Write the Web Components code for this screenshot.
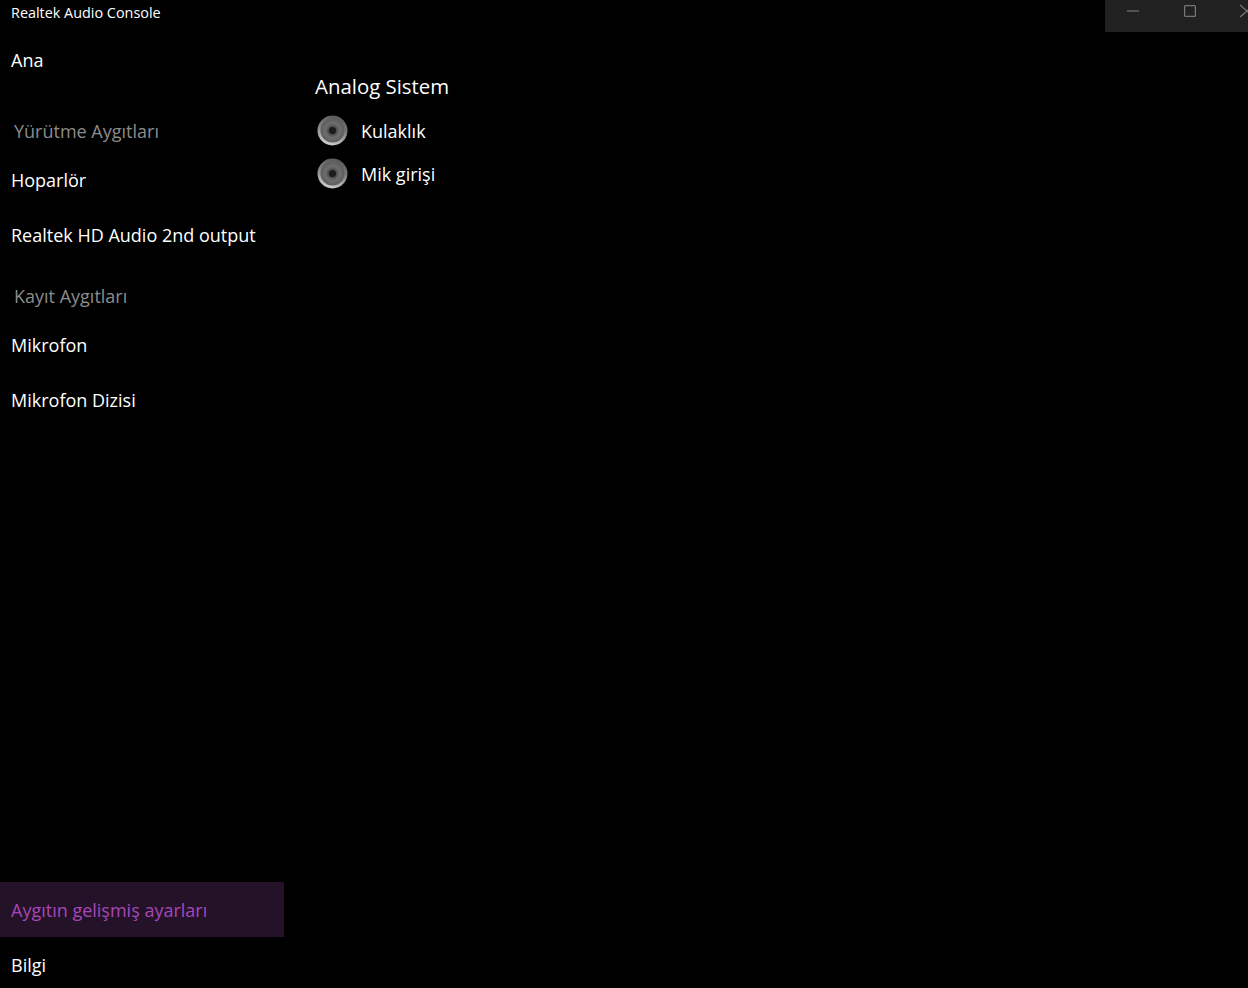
<!DOCTYPE html>
<html>
<head>
<meta charset="utf-8">
<style>
html, body { margin: 0; height: 100%; background: #000; overflow: hidden; }
body { font-family: "Open Sans", "Noto Sans", sans-serif; color: #fff; }
</style>
</head>
<body>
<audio-console></audio-console>

<template id="nav-item-tpl">
  <style>
    :host { display: flex; flex: none; align-items: center; height: 55px; padding-left: 11px; font-size: 18px; color: #fff; box-sizing: border-box; }
    :host([active]) { background: #241228; color: #a746b8; }
  </style>
  <slot></slot>
</template>

<template id="nav-head-tpl">
  <style>
    :host { display: flex; flex: none; align-items: center; height: 43px; padding-left: 14px; font-size: 18px; color: #8c8c8c; box-sizing: border-box; }
  </style>
  <slot></slot>
</template>

<template id="jack-row-tpl">
  <style>
    :host { display: flex; align-items: center; height: 43px; gap: 12px; padding-left: 1px; font-size: 18px; }
    svg { display: block; width: 33px; height: 33px; }
  </style>
  <svg viewBox="0 0 33 33">
    <defs>
      <linearGradient id="rim" x1="0.7" y1="0" x2="0.4" y2="1">
        <stop offset="0" stop-color="#565656"/>
        <stop offset="0.45" stop-color="#7c7c7c"/>
        <stop offset="1" stop-color="#cfcfcf"/>
      </linearGradient>
      <radialGradient id="disc">
        <stop offset="0.3" stop-color="#4a4a4a"/>
        <stop offset="0.6" stop-color="#6e6e6e"/>
        <stop offset="1" stop-color="#5c5c5c"/>
      </radialGradient>
      <filter id="soft"><feGaussianBlur stdDeviation="0.7"/></filter>
    </defs>
    <g filter="url(#soft)">
      <circle cx="16.5" cy="16.5" r="15" fill="url(#rim)"/>
      <circle cx="16.5" cy="16.5" r="12" fill="url(#disc)"/>
      <circle cx="16.5" cy="16.5" r="3.5" fill="#1a1a1a"/>
    </g>
  </svg>
  <span><slot></slot></span>
</template>

<template id="window-caps-tpl">
  <style>
    :host { display: block; position: absolute; top: 0; left: 1105px; width: 143px; height: 32px; background: #212121; overflow: hidden; }
    svg { position: absolute; top: 0; left: 0; }
  </style>
  <svg width="143" height="32" viewBox="0 0 143 32" fill="none" stroke="#767676" stroke-width="1.2">
    <path d="M22 11h12"/>
    <rect x="79.6" y="5.6" width="10.8" height="10.8" rx="1"/>
    <path d="M135 5l7 6-7 6M149 5l-7 6 7 6"/>
  </svg>
</template>

<template id="audio-console-tpl">
  <style>
    :host { display: grid; grid-template-columns: 284px 1fr; height: 988px; position: relative; overflow: hidden; background: #000; }
    .title { position: absolute; top: 4px; left: 11px; font-size: 14.4px; line-height: 18px; }
    nav { display: flex; flex-direction: column; padding-top: 32px; height: 992px; box-sizing: border-box; }
    .first { margin-top: 22px; }
    .second { margin-top: 12px; }
    .spacer { flex: 1; }
    main { padding: 72px 0 0 31px; }
    h2 { margin: 0 0 8px; font-weight: 400; font-size: 20.4px; line-height: 29px; }
  </style>
  <div class="title">Realtek Audio Console</div>
  <window-caps></window-caps>
  <nav>
    <nav-item>Ana</nav-item>
    <nav-head class="first">Yürütme Aygıtları</nav-head>
    <nav-item>Hoparlör</nav-item>
    <nav-item>Realtek HD Audio 2nd output</nav-item>
    <nav-head class="second">Kayıt Aygıtları</nav-head>
    <nav-item>Mikrofon</nav-item>
    <nav-item>Mikrofon Dizisi</nav-item>
    <div class="spacer"></div>
    <nav-item active>Aygıtın gelişmiş ayarları</nav-item>
    <nav-item>Bilgi</nav-item>
  </nav>
  <main>
    <h2>Analog Sistem</h2>
    <jack-row>Kulaklık</jack-row>
    <jack-row>Mik girişi</jack-row>
  </main>
</template>

<script>
function simple(tag, tplId) {
  customElements.define(tag, class extends HTMLElement {
    constructor() {
      super();
      this.attachShadow({mode: 'open'});
      this.shadowRoot.appendChild(document.getElementById(tplId).content.cloneNode(true));
    }
  });
}
simple('nav-item', 'nav-item-tpl');
simple('nav-head', 'nav-head-tpl');
simple('jack-row', 'jack-row-tpl');
simple('window-caps', 'window-caps-tpl');
simple('audio-console', 'audio-console-tpl');
</script>
</body>
</html>
